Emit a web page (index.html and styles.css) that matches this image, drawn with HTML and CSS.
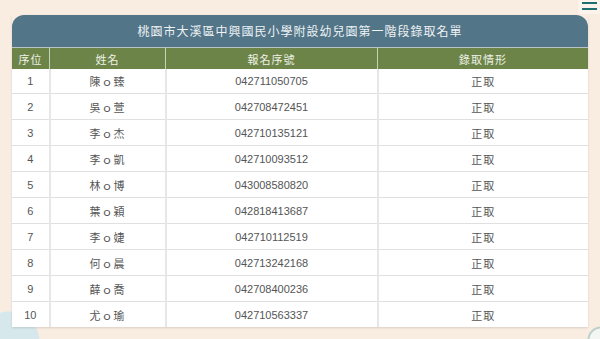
FILE: index.html
```html
<!DOCTYPE html>
<html lang="zh-Hant">
<head>
<meta charset="utf-8">
<title>錄取名單</title>
<link rel="stylesheet" href="styles.css">
</head>
<body>
<div class="menu-btn"><span></span><span></span></div>
<main class="wrap">
  <div class="title">桃園市大溪區中興國民小學附設幼兒園第一階段錄取名單</div>
  <table class="list">
    <thead>
      <tr><th class="c1">序位</th><th class="c2">姓名</th><th class="c3">報名序號</th><th class="c4">錄取情形</th></tr>
    </thead>
    <tbody>
      <tr><td>1</td><td>陳ｏ臻</td><td>042711050705</td><td>正取</td></tr>
      <tr><td>2</td><td>吳ｏ萱</td><td>042708472451</td><td>正取</td></tr>
      <tr><td>3</td><td>李ｏ杰</td><td>042710135121</td><td>正取</td></tr>
      <tr><td>4</td><td>李ｏ凱</td><td>042710093512</td><td>正取</td></tr>
      <tr><td>5</td><td>林ｏ博</td><td>043008580820</td><td>正取</td></tr>
      <tr><td>6</td><td>葉ｏ穎</td><td>042818413687</td><td>正取</td></tr>
      <tr><td>7</td><td>李ｏ婕</td><td>042710112519</td><td>正取</td></tr>
      <tr><td>8</td><td>何ｏ晨</td><td>042713242168</td><td>正取</td></tr>
      <tr><td>9</td><td>薛ｏ喬</td><td>042708400236</td><td>正取</td></tr>
      <tr><td>10</td><td>尤ｏ瑜</td><td>042710563337</td><td>正取</td></tr>
    </tbody>
  </table>
</main>
</body>
</html>
```

FILE: styles.css
```css
html, body {
  margin: 0;
  padding: 0;
  height: 339px;
  overflow: hidden;
}
body {
  background:
    radial-gradient(circle 31px at 9px 342px, #d6e8ec 30px, rgba(214,232,236,0) 31px),
    radial-gradient(circle 14px at 601px 340px, #f3f6f2 11px, #bfcfc9 12px, #bfcfc9 13px, rgba(191,207,201,0) 14px),
    #f9ece1;
  font-family: "Liberation Sans", "Noto Sans CJK TC", sans-serif;
  color: #555;
  position: relative;
  box-sizing: border-box;
  padding-top: 15px;
}
.wrap {
  width: 576px;
  margin: 0 auto;
  box-shadow: 0 1px 2px rgba(0,0,0,0.12);
}
.title {
  height: 32px;
  line-height: 31px;
  background: #537588;
  color: #eef3f5;
  text-align: center;
  font-family: "Noto Sans CJK TC", sans-serif;
  font-size: 12px;
  letter-spacing: 1px;
  border-radius: 12px 12px 0 0;
}
.list {
  width: 100%;
  border-collapse: collapse;
  table-layout: fixed;
  background: #fff;
}
.list th {
  background: #6d8449;
  color: #eef2e6;
  font-family: "Noto Sans CJK TC", sans-serif;
  font-weight: normal;
  font-size: 11px;
  letter-spacing: 1px;
  height: 21px;
  padding: 0;
  border-left: 1px solid #c7d2b6;
  border-top: 1px solid #b8c4c8;
}
.list th:first-child { border-left: none; }
.c1 { width: 37px; }
.c2 { width: 115px; }
.c3 { width: 211px; }
.list td {
  height: 25px;
  padding: 0;
  text-align: center;
  font-size: 11px;
  border-left: 2px solid #e6e6e6;
  border-top: 1px solid #e0e0e0;
}
.list td:first-child { border-left: none; }
.list tbody tr:first-child td { height: 24px; border-top: none; }
.list td:nth-child(2), .list td:nth-child(4) {
  font-family: "Noto Sans CJK TC", sans-serif;
  letter-spacing: 1px;
}
.menu-btn {
  position: absolute;
  right: 0;
  top: 0;
  width: 22px;
  height: 14px;
  background: #fcf4ec;
  display: flex;
  flex-direction: column;
  align-items: center;
  gap: 4px;
  padding-top: 2px;
  box-sizing: border-box;
}
.menu-btn span {
  display: block;
  width: 15px;
  height: 2px;
  background: #1f6e72;
}
```
